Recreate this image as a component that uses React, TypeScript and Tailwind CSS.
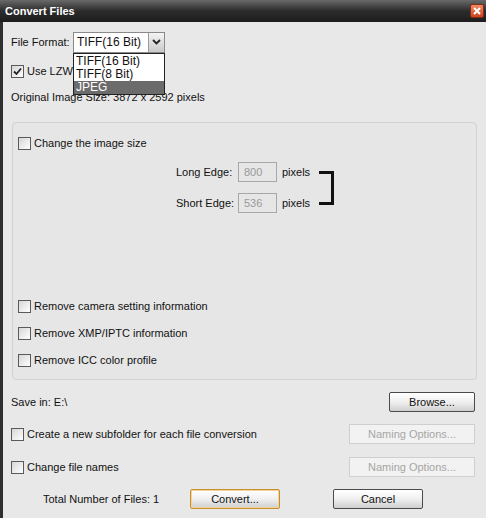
import React from "react";

function Check({ checked = false }: { checked?: boolean }) {
    return (
        <span className="w-[13px] h-[13px] shrink-0 border border-[#5a5a5a] bg-gradient-to-br from-[#d6d6d6] to-[#ffffff] flex items-center justify-center">
            {checked && (
                <svg width="11" height="11" viewBox="0 0 11 11">
                    <path d="M2 5.5 L4.5 8 L9 2.5" fill="none" stroke="#222" strokeWidth="1.8" />
                </svg>
            )}
        </span>
    );
}

function CheckRow({ label, checked = false }: { label: string; checked?: boolean }) {
    return (
        <div className="flex items-center gap-[3px] h-[13px]">
            <Check checked={checked} />
            <span>{label}</span>
        </div>
    );
}

function Button({ label, w, accent = false }: { label: string; w: string; accent?: boolean }) {
    return (
        <div
            className={`${w} h-[20px] flex items-center justify-center rounded-[2px] border bg-gradient-to-b from-[#ffffff] via-[#f0f0f0] to-[#cfcfcf] ${
                accent ? "border-[#c8902e] shadow-[inset_0_0_0_1px_#f3d39a]" : "border-[#4a4a4a]"
            }`}
        >
            {label}
        </div>
    );
}

function Disabled({ label }: { label: string }) {
    return (
        <div className="w-[126px] h-[20px] flex items-center justify-center border border-[#cfcfcf] bg-[#f2f2f2] text-[#a6a6a6]">
            {label}
        </div>
    );
}

export default function App() {
    return (
        <div className="w-[486px] h-[518px] flex flex-col font-['Liberation_Sans',Arial,sans-serif] text-[11px] text-[#111] leading-[13px]">
            {/* title bar */}
            <div className="h-[22px] shrink-0 flex items-center justify-between pl-[5px] pr-[2px] bg-gradient-to-b from-[#6a6a6a] via-[#2c2c2c] to-[#1d1d1d]">
                <span className="text-white font-bold text-[11px]">Convert Files</span>
                <span className="w-[14px] h-[14px] rounded-[2px] bg-gradient-to-b from-[#f08a66] to-[#c8421e] border border-[#8a2a10] flex items-center justify-center">
                    <svg width="8" height="8" viewBox="0 0 8 8">
                        <path d="M1 1 L7 7 M7 1 L1 7" stroke="#fff" strokeWidth="2" />
                    </svg>
                </span>
            </div>

            <div className="flex-1 flex flex-col bg-[#e8e8e8] border-l-[3px] border-l-[#2f2f2f] pl-[8px] pr-[11px]">
                {/* file format */}
                <div className="mt-[10px] h-[20px] flex items-center">
                    <span className="w-[62px]">File Format:</span>
                    <div className="relative w-[92px] h-[21px] border border-[#8a8a8a] bg-white flex">
                        <span className="flex-1 flex items-center pl-[3px] text-[12px]">TIFF(16 Bit)</span>
                        <span className="w-[16px] border-l border-[#9a9a9a] bg-gradient-to-b from-[#f4f4f4] to-[#c9c9c9] flex items-center justify-center">
                            <svg width="9" height="6" viewBox="0 0 9 6">
                                <path d="M1 1 L4.5 4.5 L8 1" fill="none" stroke="#222" strokeWidth="1.8" />
                            </svg>
                        </span>
                        <div className="absolute z-10 left-[-1px] top-[20px] w-[92px] border border-[#222] bg-white flex flex-col text-[12px] leading-[13px]">
                            <span className="pl-[2px] h-[13px] mt-[1px]">TIFF(16 Bit)</span>
                            <span className="pl-[2px] h-[13px]">TIFF(8 Bit)</span>
                            <span className="pl-[2px] h-[13px] bg-[#6b6b6b] text-white">JPEG</span>
                        </div>
                    </div>
                </div>

                <div className="mt-[13px]">
                    <CheckRow label="Use LZW Compression" checked />
                </div>

                <div className="mt-[13px]">Original Image Size: 3872 x 2592 pixels</div>

                {/* image size panel */}
                <div className="mt-[18px] ml-[1px] w-[465px] h-[258px] shrink-0 rounded-[4px] border border-[#d2d2d2] bg-[#e6e6e6] flex flex-col pl-[5px] pt-[14px] pb-[12px]">
                    <CheckRow label="Change the image size" />
                    <div className="mt-[12px] ml-[158px] flex items-center gap-[9px]">
                        <div className="flex flex-col gap-[11px]">
                            <div className="h-[20px] flex items-center">
                                <span className="w-[62px]">Long Edge:</span>
                                <span className="w-[39px] h-[20px] border border-[#a8a8a8] flex items-center pl-[5px] text-[#9a9a9a]">800</span>
                                <span className="ml-[5px]">pixels</span>
                            </div>
                            <div className="h-[20px] flex items-center">
                                <span className="w-[62px]">Short Edge:</span>
                                <span className="w-[39px] h-[20px] border border-[#a8a8a8] flex items-center pl-[5px] text-[#9a9a9a]">536</span>
                                <span className="ml-[5px]">pixels</span>
                            </div>
                        </div>
                        <div className="w-[15px] h-[34px] border-t-[3px] border-r-[3px] border-b-[3px] border-[#111]" />
                    </div>
                    <div className="mt-auto flex flex-col gap-[14px]">
                        <CheckRow label="Remove camera setting information" />
                        <CheckRow label="Remove XMP/IPTC information" />
                        <CheckRow label="Remove ICC color profile" />
                    </div>
                </div>

                <div className="mt-[12px] h-[20px] flex items-center justify-between">
                    <span>Save in: E:\</span>
                    <Button label="Browse..." w="w-[86px]" />
                </div>

                <div className="mt-[12px] h-[20px] flex items-center justify-between">
                    <CheckRow label="Create a new subfolder for each file conversion" />
                    <Disabled label="Naming Options..." />
                </div>

                <div className="mt-[13px] h-[20px] flex items-center justify-between">
                    <CheckRow label="Change file names" />
                    <Disabled label="Naming Options..." />
                </div>

                <div className="mt-[12px] h-[20px] flex items-center">
                    <span className="ml-[32px] w-[147px]">Total Number of Files: 1</span>
                    <Button label="Convert..." w="w-[90px]" accent />
                    <span className="ml-[53px]">
                        <Button label="Cancel" w="w-[90px]" />
                    </span>
                </div>
            </div>
        </div>
    );
}
